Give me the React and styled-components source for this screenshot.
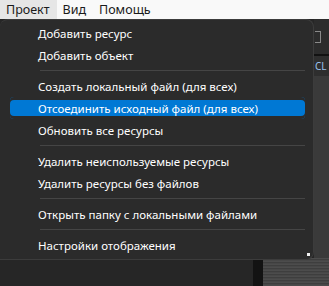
import React from 'react'
import styled, { createGlobalStyle } from 'styled-components'

const Global = createGlobalStyle`
  html, body { margin: 0; padding: 0; background: #262626; }
  body { font-family: "Noto Sans", "Open Sans", sans-serif; overflow: hidden; }
`

const Screen = styled.div`
  position: relative;
  width: 329px;
  height: 286px;
  display: flex;
  flex-direction: column;
  background: #262626;
`

const MenuBar = styled.div`
  display: flex;
  height: 19px;
  background: #f9f9f9;
  font-size: 12.5px;
  color: #1a1a1a;
`

const MenuTitle = styled.div`
  display: flex;
  align-items: center;
  padding: 0 7px 0 6px;
  background: ${p => (p.$open ? '#e6e6e6' : 'transparent')};
`

const Workspace = styled.div`
  flex: 1;
  display: grid;
  grid-template-columns: 1fr 15px;
  grid-template-rows: 1fr 28px;
`

const Canvas = styled.div`
  background: #262626;
`

const SidePanel = styled.div`
  display: flex;
  flex-direction: column;
  background: #3a3a3a;
`

const SideHeader = styled.div`
  height: 35px;
  background: #2c2c2c;
  border-bottom: 2px solid #121212;
  display: flex;
  align-items: center;
`

const TabIcon = styled.div`
  width: 5px;
  height: 10px;
  margin-left: 1px;
  border: 1px solid #8a8a8a;
  border-left: none;
`

const SideLabel = styled.div`
  height: 20px;
  background: #2e2e2e;
  color: #9cc3ee;
  font-size: 10px;
  line-height: 20px;
  padding-left: 1px;
  overflow: hidden;
  white-space: nowrap;
`

const BottomStrip = styled.div`
  grid-column: 1 / span 2;
  display: grid;
  grid-template-columns: 253px 10px 1fr;
`

const StripDark = styled.div`
  background: ${p => p.$c};
`

const Texture = styled.div`
  background:
    repeating-linear-gradient(180deg, #4c4c4c 0 1px, #3e3e3e 1px 2px, #474747 2px 3px);
`

const Dropdown = styled.div`
  position: absolute;
  left: 0;
  top: 19px;
  width: 314px;
  box-sizing: border-box;
  padding: 2px 0 3px;
  background: #2b2b2b;
  border: 1px solid #3c3c3c;
  border-left: none;
  border-radius: 0 8px 8px 0;
  border-top-left-radius: 8px;
  color: #ffffff;
  font-size: 11.5px;
`

const Item = styled.div`
  height: 22px;
  display: flex;
  align-items: center;
  margin: 0 8px 0 10px;
  padding-left: 28px;
  border-radius: 4px;
  background: ${p => (p.$active ? '#0078d4' : 'transparent')};
  box-shadow: ${p => (p.$active ? 'inset 0 3px 0 #2b2b2b, inset 0 -3px 0 #2b2b2b' : 'none')};
  white-space: nowrap;
`

const Separator = styled.div`
  height: 1px;
  margin: 4px 8px 4px 40px;
  background: #454545;
`

const Grip = styled.div`
  position: absolute;
  right: 3px;
  bottom: 3px;
  width: 3px;
  height: 3px;
  background: #f0f0f0;
`

const groups = [
  ['Добавить ресурс', 'Добавить объект'],
  ['Создать локальный файл (для всех)', 'Отсоединить исходный файл (для всех)', 'Обновить все ресурсы'],
  ['Удалить неиспользуемые ресурсы', 'Удалить ресурсы без файлов'],
  ['Открыть папку с локальными файлами'],
  ['Настройки отображения'],
]

export default function App() {
  return (
    <Screen>
      <Global />
      <MenuBar>
        <MenuTitle $open>Проект</MenuTitle>
        <MenuTitle>Вид</MenuTitle>
        <MenuTitle>Помощь</MenuTitle>
      </MenuBar>
      <Workspace>
        <Canvas />
        <SidePanel>
          <SideHeader>
            <TabIcon />
          </SideHeader>
          <SideLabel>CL</SideLabel>
        </SidePanel>
        <BottomStrip>
          <StripDark $c="#262626" />
          <StripDark $c="#131313" />
          <Texture />
        </BottomStrip>
      </Workspace>
      <Dropdown>
        {groups.map((g, i) => (
          <React.Fragment key={i}>
            {i > 0 && <Separator />}
            {g.map(label => (
              <Item key={label} $active={label.startsWith('Отсоединить')}>
                {label}
              </Item>
            ))}
          </React.Fragment>
        ))}
        <Grip />
      </Dropdown>
    </Screen>
  )
}
